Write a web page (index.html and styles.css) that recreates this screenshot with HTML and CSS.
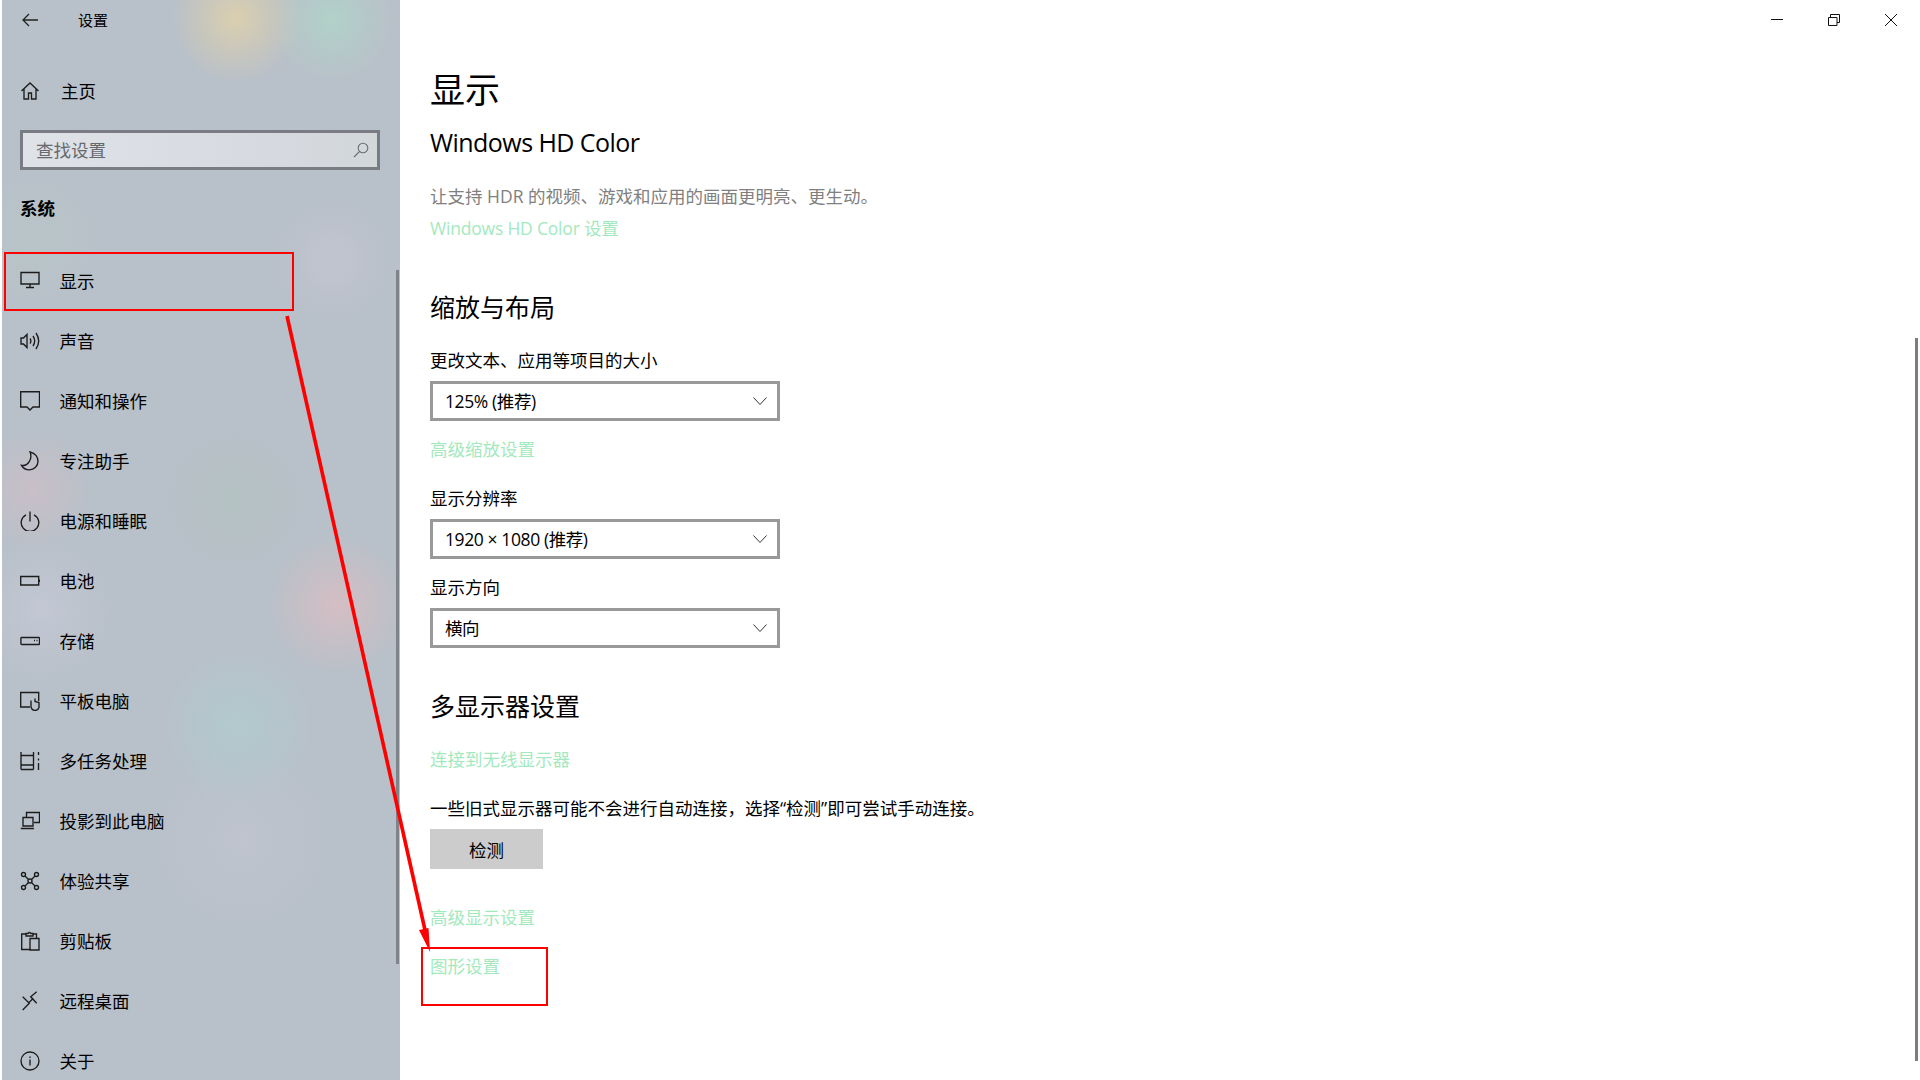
FILE: index.html
```html
<!DOCTYPE html>
<html lang="zh-CN">
<head>
<meta charset="utf-8">
<title>设置</title>
<link rel="stylesheet" href="styles.css">
</head>
<body>
<div class="window">
  <aside class="sidebar">
    <div class="titlebar">
      <svg class="back" width="16" height="14" viewBox="0 0 16 14"><path d="M7 1 1 7l6 6M1 7h15"/></svg>
      <span class="app-title">设置</span>
    </div>
    <div class="nav-row home">
      <svg class="ico" viewBox="0 0 20 20"><path d="M1.500 10 10 2l8.500 8M4 8v10h4.500v-6h3v6H16V8"/></svg>
      <span>主页</span>
    </div>
    <div class="search">
      <span>查找设置</span>
      <svg class="search-ico" width="16" height="16" viewBox="0 0 16 16"><circle cx="10" cy="6" r="4.800"/><path d="M6.500 9.500 1 15"/></svg>
    </div>
    <div class="group">系统</div>
    <nav class="nav">
      <div class="nav-row"><svg class="ico" viewBox="0 0 20 20"><path d="M1 1.500h18v11.500H1zM10 13v3.500M6 16.500h8"/></svg><span>显示</span></div>
      <div class="nav-row"><svg class="ico" viewBox="0 0 20 20"><path d="M1 7h2.500L7 3.500v13L3.500 13H1zM10 7.500q1.800 2.500 0 5M13 5q3.400 5 0 10M16 2q5.400 8 0 16"/></svg><span>声音</span></div>
      <div class="nav-row"><svg class="ico" viewBox="0 0 20 20"><path d="M.7 .7h18.800v15.300H13l-3 3-3-3H.7z"/></svg><span>通知和操作</span></div>
      <div class="nav-row"><svg class="ico" viewBox="0 0 20 20"><path d="M10 .8c5 1.500 8 5 8 9.500 0 4.800-3.800 8.500-8.500 8.500-3.500 0-6.500-1.800-8-4.500 6 1.500 11.500-6 8.500-13.500z"/></svg><span>专注助手</span></div>
      <div class="nav-row"><svg class="ico" viewBox="0 0 20 20"><path d="M6 3.800a8.800 8.800 0 1 0 8 0M10 .5v10"/></svg><span>电源和睡眠</span></div>
      <div class="nav-row"><svg class="ico" viewBox="0 0 20 20"><path d="M.7 5.500h18v8.500H.7zM19.500 8.500v2.500"/></svg><span>电池</span></div>
      <div class="nav-row"><svg class="ico" viewBox="0 0 20 20"><path d="M1.800 6.500h17q.7 0 .7.700v5.600q0 .7-.7.700h-17q-.9 0-.9-.7V7.200q0-.7.900-.7zM14 9.500h1M16.500 9.500h1"/></svg><span>存储</span></div>
      <div class="nav-row"><svg class="ico" viewBox="0 0 20 20"><path d="M10 16H.7V1.500h18V10M11 9.500V16q1 3.500 4 3.500t4-3v-5l-4-1V7.500"/></svg><span>平板电脑</span></div>
      <div class="nav-row"><svg class="ico" viewBox="0 0 20 20"><path d="M1 1v3.500h12.500V1M1 4.500V14h12.500V4.500M1 18.500V14M13.500 18.500V14M1 18.500h12.500M18.500 1v3M18.500 7.500v2M18.500 12v7"/></svg><span>多任务处理</span></div>
      <div class="nav-row"><svg class="ico" viewBox="0 0 20 20"><path d="M6.500 6V1.500h13v10H14M3 6.500h10V15H3zM.8 17.500H14"/></svg><span>投影到此电脑</span></div>
      <div class="nav-row"><svg class="ico" viewBox="0 0 20 20"><circle cx="3.500" cy="3.500" r="2"/><circle cx="16.500" cy="3.500" r="2"/><circle cx="3.500" cy="16.500" r="2"/><circle cx="16.500" cy="16.500" r="2"/><circle cx="10" cy="10" r="2"/><path d="m5 5 3.500 3.500M15 5l-3.500 3.500M5 15l3.500-3.500M15 15l-3.500-3.500"/></svg><span>体验共享</span></div>
      <div class="nav-row"><svg class="ico" viewBox="0 0 20 20"><path d="M6 3H1.700v15.500h8M13 3h3.500v4M6 5V2.500h2q1-2 3 0h2V5zM10 7.500h9V19h-9z"/></svg><span>剪贴板</span></div>
      <div class="nav-row"><svg class="ico" viewBox="0 0 20 20"><path d="m2.700 5.700 6.600 6.600L2.700 19M16.700.7l-6 5 6 6.600M8.300 12.300l5-5"/></svg><span>远程桌面</span></div>
      <div class="nav-row"><svg class="ico" viewBox="0 0 20 20"><circle cx="10" cy="10" r="9"/><path d="M10 8.500v6M10 5.500v1.500"/></svg><span>关于</span></div>
    </nav>
    <div class="side-scroll"></div>
  </aside>

  <main class="main">
    <div class="caption">
      <svg class="cap-ico" width="12" height="12" viewBox="0 0 12 12"><path d="M0 5.500h12"/></svg>
      <svg class="cap-ico" width="12" height="12" viewBox="0 0 12 12"><path d="M.5 3.500h8.500v8H.5zM2.500 3.500V.5H11.500v8H9"/></svg>
      <svg class="cap-ico" width="12" height="12" viewBox="0 0 12 12"><path d="m0 0 12 12M12 0 0 12"/></svg>
    </div>
    <h1 class="page-title">显示</h1>
    <h2 class="section hd">Windows HD Color</h2>
    <p class="text muted desc">让支持 HDR 的视频、游戏和应用的画面更明亮、更生动。</p>
    <a class="text link tight latin">Windows HD Color 设置</a>
    <h2 class="section scale">缩放与布局</h2>
    <label class="text field-label">更改文本、应用等项目的大小</label>
    <div class="select first"><span class="select-value">125% (推荐)</span><svg class="chev" width="14" height="8" viewBox="0 0 14 8"><path d="m.5.500 6.500 7 6.500-7"/></svg></div>
    <a class="text link after-select">高级缩放设置</a>
    <label class="text field-label">显示分辨率</label>
    <div class="select first"><span class="select-value">1920 × 1080 (推荐)</span><svg class="chev" width="14" height="8" viewBox="0 0 14 8"><path d="m.5.500 6.500 7 6.500-7"/></svg></div>
    <label class="text field-label close">显示方向</label>
    <div class="select first"><span class="select-value">横向</span><svg class="chev" width="14" height="8" viewBox="0 0 14 8"><path d="m.5.500 6.500 7 6.500-7"/></svg></div>
    <h2 class="section multi">多显示器设置</h2>
    <a class="text link gap">连接到无线显示器</a>
    <p class="text gap">一些旧式显示器可能不会进行自动连接，选择“检测”即可尝试手动连接。</p>
    <button class="btn">检测</button>
    <a class="text link after-btn">高级显示设置</a>
    <a class="text link gap">图形设置</a>
    <div class="main-scroll"></div>
  </main>

  <div class="mark mark-nav"></div>
  <div class="mark mark-link"></div>
  <svg class="arrow" width="1920" height="1080" viewBox="0 0 1920 1080"><path class="arrow-line" d="M287 316 425 930"/><path class="arrow-head" d="M430 952 419 930 428.500 928z"/></svg>
</div>
</body>
</html>
```
FILE: styles.css
```css
* { box-sizing: border-box; }
html, body { margin: 0; height: 100%; }
body {
  background: #fff;
  color: #000;
  font-family: "Open Sans", "Noto Sans CJK SC", sans-serif;
  font-size: 17.5px;
  overflow: hidden;
}
.window {
  position: relative;
  display: flex;
  width: 1920px;
  height: 1080px;
  overflow: hidden;
  background: #fff;
}
.sidebar {
  position: relative;
  flex: none;
  width: 398px;
  height: 1080px;
  margin-left: 2px;
  background:
    radial-gradient(circle 65px at 234px 18px, rgba(222,208,172,.9), rgba(222,208,172,0)),
    radial-gradient(circle 62px at 330px 20px, rgba(175,215,200,.75), rgba(175,215,200,0)),
    radial-gradient(circle 70px at 335px 605px, rgba(214,190,195,.95), rgba(214,190,195,0)),
    radial-gradient(circle 70px at 232px 500px, rgba(175,195,185,.45), rgba(175,195,185,0)),
    radial-gradient(circle 60px at 30px 490px, rgba(212,190,198,.6), rgba(212,190,198,0)),
    radial-gradient(circle 80px at 236px 725px, rgba(172,210,208,.55), rgba(172,210,208,0)),
    radial-gradient(circle 60px at 330px 260px, rgba(200,200,212,.6), rgba(200,200,212,0)),
    radial-gradient(circle 70px at 40px 610px, rgba(205,208,222,.5), rgba(205,208,222,0)),
    radial-gradient(circle 90px at 240px 840px, rgba(197,200,210,.5), rgba(197,200,210,0)),
    radial-gradient(circle 80px at 30px 240px, rgba(185,205,200,.35), rgba(185,205,200,0)),
    #b8c0c9;
}
.titlebar {
  display: flex;
  align-items: center;
  height: 40px;
  padding-left: 20px;
}
.back { fill: none; stroke: #222; stroke-width: 1.3; }
.app-title { margin: -2px 0 0 40px; font-size: 15px; }
.nav-row {
  display: flex;
  align-items: center;
  height: 60px;
  padding-left: 18px;
}
.nav-row span { margin: -2px 0 0 19.500px; }
.home { margin-top: 21px; }
.home span { margin-left: 21px; }
.ico {
  flex: none;
  width: 20px;
  height: 20px;
  fill: none;
  stroke: #1c1c1c;
  stroke-width: 1.35;
}
.search {
  display: flex;
  align-items: center;
  justify-content: space-between;
  width: 360px;
  height: 40px;
  margin: 9px 0 0 18px;
  padding: 0 8px 0 13px;
  border: 3px solid #7a7c84;
  background: linear-gradient(90deg, #dfe2e7, #d6d9df 70%, #d2d7da);
  color: #66696e;
}
.search span { margin-top: -2px; }
.search-ico { fill: none; stroke: #6a6d72; stroke-width: 1.1; }
.group {
  height: 26px;
  margin: 25px 0 0 18px;
  line-height: 26px;
  font-weight: 700;
}
.nav { margin-top: 30px; }
.side-scroll {
  position: absolute;
  top: 270px;
  right: 1px;
  width: 3px;
  height: 694px;
  background: #7f848a;
}
.main {
  position: relative;
  flex: 1;
  padding-left: 30px;
}
.caption {
  position: absolute;
  top: 14px;
  right: 23px;
  display: flex;
  gap: 45px;
}
.cap-ico { fill: none; stroke: #111; stroke-width: 1; }
.page-title {
  margin: 66px 0 0;
  font-size: 35px;
  font-weight: 400;
  line-height: 48px;
}
.section {
  margin: 0;
  font-size: 25px;
  font-weight: 400;
  line-height: 34px;
}
.section.hd { margin-top: 11px; letter-spacing: -.55px; }
.section.scale { margin-top: 49px; }
.section.multi { margin-top: 41px; }
.text {
  display: block;
  margin: 0;
  line-height: 26px;
}
.muted { color: #808080; }
.link { color: #a3e9bd; }
.latin { letter-spacing: -.2px; }
.desc { margin-top: 24px; }
.tight { margin-top: 6px; }
.field-label { margin-top: 23px; }
.field-label.close { margin-top: 15px; }
.gap { margin-top: 23px; }
.after-select { margin-top: 15px; }
.after-btn { margin-top: 35px; }
.select {
  display: flex;
  align-items: center;
  justify-content: space-between;
  width: 350px;
  height: 40px;
  padding: 0 10px 0 12px;
  border: 3px solid #999;
  background: #fff;
}
.select-value { margin-top: -2px; letter-spacing: -.4px; }
.select.first { margin-top: 8px; }
.chev { fill: none; stroke: #333; stroke-width: 1; }
.btn {
  display: block;
  width: 113px;
  height: 40px;
  margin: 8px 0 0;
  padding: 0;
  border: 0;
  background: #ccc;
  color: #000;
  font: inherit;
}
.main-scroll {
  position: absolute;
  top: 338px;
  right: 2px;
  width: 3px;
  height: 723px;
  background: #7d7d7d;
}
.mark {
  position: absolute;
  border: 2px solid #f00;
}
.mark-nav { left: 4px; top: 252px; width: 290px; height: 59px; }
.mark-link { left: 421px; top: 947px; width: 127px; height: 59px; }
.arrow {
  position: absolute;
  left: 0;
  top: 0;
  pointer-events: none;
}
.arrow-line { stroke: #f00; stroke-width: 3.6; fill: none; }
.arrow-head { fill: #f00; }
```
